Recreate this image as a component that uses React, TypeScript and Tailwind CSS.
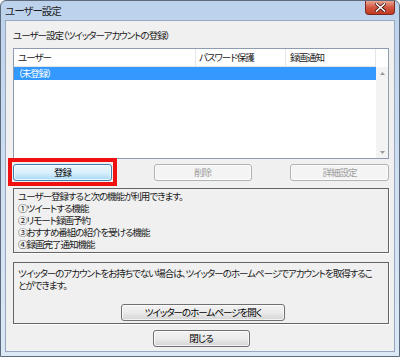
import React from "react";

const jp = "font-['Noto_Sans_CJK_JP','Noto_Sans',sans-serif] [font-feature-settings:'palt'] tracking-[-1px]";

type BtnProps = {
  label: string;
  variant?: "normal" | "focused" | "disabled";
  className?: string;
};

function WinButton({ label, variant = "normal", className = "" }: BtnProps) {
  const look =
    variant === "focused"
      ? "border-[#3c7fb1] bg-gradient-to-b from-[#eaf6fd] via-[#d9f0fc] to-[#a7d9f5] text-black"
      : variant === "disabled"
      ? "border-[#adb2b5] bg-[#f4f4f4] text-[#a0a0a0]"
      : "border-[#707070] bg-gradient-to-b from-[#f2f2f2] via-[#ebebeb] to-[#d4d4d4] text-black";
  return (
    <div
      className={`h-[17px] flex items-center justify-center rounded-[3px] border text-[9.5px] leading-none shadow-[inset_0_0_0_1px_rgba(255,255,255,0.7)] ${look} ${className}`}
    >
      {label}
    </div>
  );
}

export default function App() {
  const features = [
    "ユーザー登録すると次の機能が利用できます。",
    "①ツイートする機能",
    "②リモート録画予約",
    "③おすすめ番組の紹介を受ける機能",
    "④録画完了通知機能",
  ];

  return (
    <div
      className={`w-[400px] h-[357px] flex flex-col overflow-hidden border border-[#5d6b7c] rounded-t-[6px] bg-gradient-to-b from-[#bcd2ec] via-[#cfdff2] to-[#dbe8f6] text-black ${jp}`}
    >
      {/* title bar */}
      <div className="h-[19px] flex items-start justify-between">
        <div className="pl-[4px] pt-[2px] text-[10.5px] leading-[15px] text-[#1e1e1e]">ユーザー設定</div>
        <div className="mr-[4px] w-[30px] h-[14px] rounded-b-[4px] border border-t-0 border-[#7a2a22] bg-gradient-to-b from-[#e8a493] via-[#d2553f] to-[#c23a22] flex items-center justify-center">
          <svg width="11" height="9" viewBox="0 0 11 9">
            <path d="M1.5 1 L9.5 8 M9.5 1 L1.5 8" stroke="#3a1410" strokeWidth="3" strokeLinecap="square" />
            <path d="M1.5 1 L9.5 8 M9.5 1 L1.5 8" stroke="#ffffff" strokeWidth="1.6" strokeLinecap="square" />
          </svg>
        </div>
      </div>

      {/* client area */}
      <div className="mx-[4px] mb-[4px] flex-1 flex flex-col border border-[#97a8be] bg-[#f0f0f0] pl-[7px] pr-[5px] pt-[7px]">
        <div className="h-[14px] text-[9.5px] leading-[14px] text-[#1a1a1a]">
          ユーザー設定（ツイッターアカウントの登録）
        </div>

        {/* list view */}
        <div className="mt-[6px] h-[111px] border border-[#8e9cb2] bg-white flex">
          <div className="flex-1 flex flex-col">
            <div className="h-[18px] flex border-b border-[#e3e5e8] text-[9.5px] leading-[17px] text-[#1a1a1a]">
              <div className="w-[182px] pl-[4px] border-r border-[#e3e5e8]">ユーザー</div>
              <div className="w-[90px] pl-[3px] border-r border-[#e3e5e8]">パスワード保護</div>
              <div className="flex-1 pl-[4px] border-r border-[#e3e5e8]">録画通知</div>
            </div>
            <div className="h-[13px] bg-[#3399ff] text-white text-[9.5px] leading-[13px] pl-[4px]">
              （未登録）
            </div>
          </div>
          <div className="w-[12px] flex flex-col bg-[#f3f3f3]">
            <div className="h-[18px] bg-white" />
            <div className="h-[12px] flex items-center justify-center">
              <svg width="5" height="3" viewBox="0 0 5 3">
                <path d="M0 3 L2.5 0 L5 3 Z" fill="#9a9a9a" />
              </svg>
            </div>
            <div className="flex-1" />
            <div className="h-[12px] flex items-center justify-center">
              <svg width="5" height="3" viewBox="0 0 5 3">
                <path d="M0 0 L2.5 3 L5 0 Z" fill="#9a9a9a" />
              </svg>
            </div>
          </div>
        </div>

        {/* buttons row */}
        <div className="mt-[5px] flex items-center justify-between">
          <div className="relative w-[99px]">
            <WinButton label="登録" variant="focused" />
            <div className="absolute -left-[5px] -right-[5px] -top-[6px] -bottom-[5px] border-4 border-[#f01010] pointer-events-none" />
          </div>
          <WinButton label="削除" variant="disabled" className="w-[98px] ml-[3px]" />
          <WinButton label="詳細設定" variant="disabled" className="w-[99px]" />
        </div>

        {/* feature box */}
        <div className="mt-[7px] h-[65px] border border-[#646464] shadow-[1px_1px_0_#ffffff] pl-[4px] pt-[1px] text-[9.5px] leading-[12px] text-[#1a1a1a]">
          {features.map((f) => (
            <div key={f}>{f}</div>
          ))}
        </div>

        {/* twitter box */}
        <div className="mt-[9px] h-[62px] border border-[#646464] shadow-[1px_1px_0_#ffffff] flex flex-col pl-[4px] pt-[4px]">
          <div className="text-[9.5px] leading-[12px] text-[#1a1a1a] whitespace-nowrap">
            ツイッターのアカウントをお持ちでない場合は、ツイッターのホームページでアカウントを取得するこ
            <br />
            とができます。
          </div>
          <div className="flex-1" />
          <div className="flex justify-center pb-[2px]">
            <WinButton label="ツイッターのホームページを開く" className="w-[164px]" />
          </div>
        </div>

        <div className="mt-[6px] flex justify-center">
          <WinButton label="閉じる" className="w-[97px]" />
        </div>
      </div>
    </div>
  );
}
